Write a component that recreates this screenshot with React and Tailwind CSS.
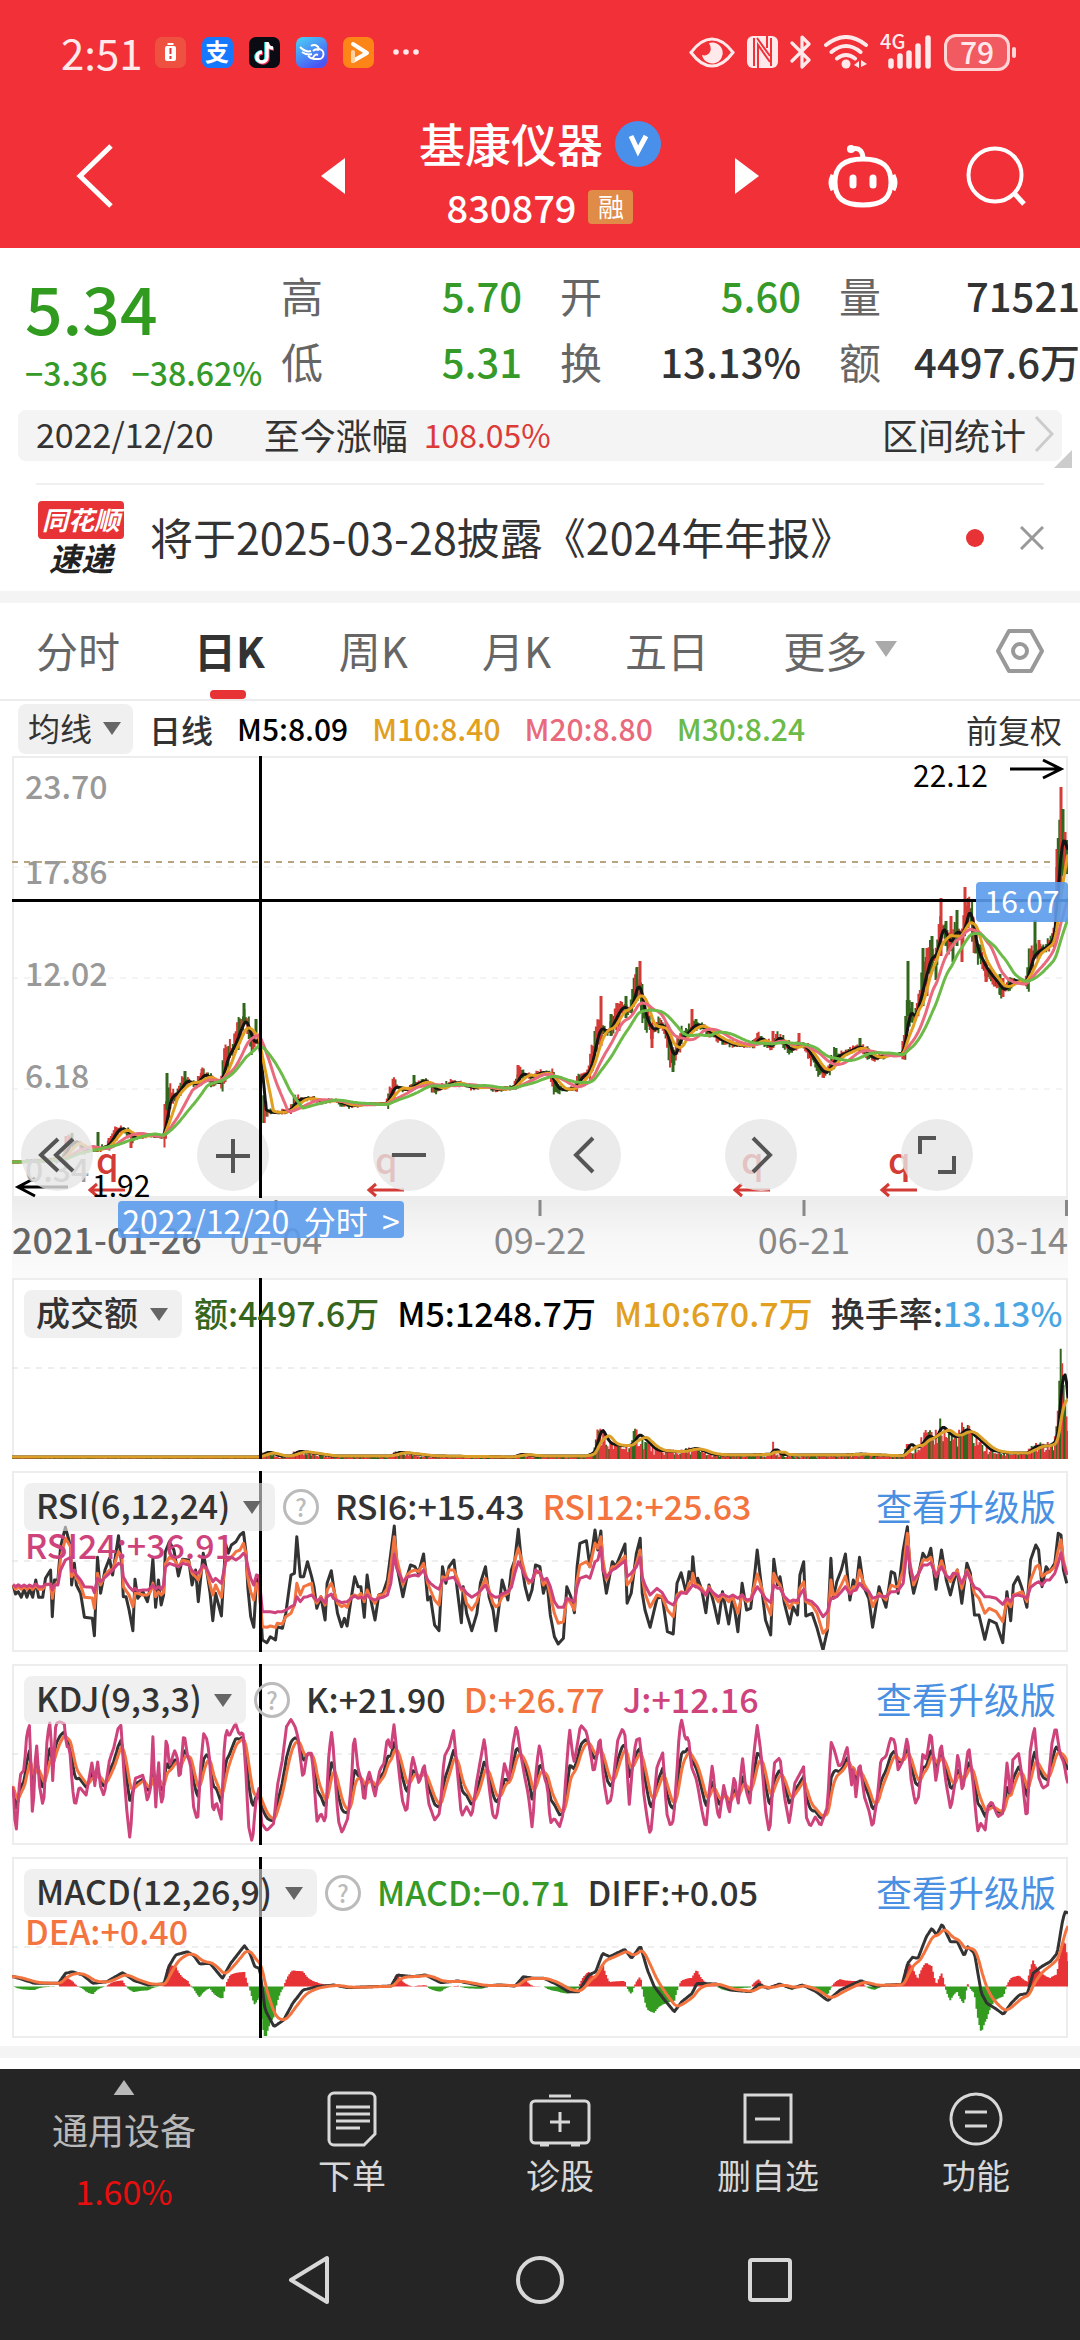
import React from 'react';

const BARS = 728;
const WIDTH = 1056;
const STEP = WIDTH / (BARS - 1);

const COLORS = {
  black: '#141414',
  ink: '#333333',
  orange: '#e2a021',
  pink: '#e96a7c',
  green: '#6cba48',
  coral: '#f3743f',
  magenta: '#cf437c',
  up: '#d23b36',
  down: '#32661c',
};

// [x, y] turning points of the closing price, in chart pixels
const closePoints = [
  [0, 406], [22, 405], [50, 402], [56, 387], [64, 386], [71, 394], [84, 394], [95, 389], [105, 372], [112, 374], [120, 382],
  [133, 379], [151, 381], [153, 354], [156, 342], [165, 336], [172, 324], [182, 329], [191, 317], [199, 326], [208, 327],
  [212, 304], [220, 291], [229, 267], [233, 262], [237, 284], [243, 287], [247, 279], [248, 350], [252, 355], [263, 357],
  [277, 354], [283, 344], [296, 342], [308, 346], [320, 344], [336, 350], [353, 348], [373, 348], [380, 330], [392, 334],
  [411, 324], [423, 334], [440, 326], [460, 332], [473, 331], [484, 334], [501, 331], [507, 317], [518, 321], [528, 316],
  [538, 319], [542, 331], [548, 334], [562, 332], [567, 321], [576, 316], [581, 292], [586, 269], [592, 277], [597, 273],
  [603, 259], [610, 249], [616, 257], [621, 238], [625, 222], [631, 261], [640, 276], [647, 266], [653, 277], [660, 306],
  [665, 284], [674, 277], [680, 269], [686, 269], [697, 277], [707, 284], [721, 289], [738, 290], [747, 281], [757, 292],
  [765, 280], [777, 295], [786, 287], [792, 291], [801, 305], [810, 318], [815, 314], [822, 301], [834, 296], [846, 290],
  [860, 303], [872, 299], [889, 298], [892, 281], [895, 248], [900, 266], [907, 240], [912, 218], [918, 198], [923, 203],
  [927, 170], [931, 174], [936, 190], [943, 172], [949, 184], [952, 160], [957, 152], [962, 191], [973, 214], [985, 228],
  [990, 236], [998, 224], [1013, 227], [1017, 204], [1024, 195], [1033, 191], [1041, 180], [1044, 130], [1047, 70], [1051, 92], [1056, 98],
];

// single long candles: [x, top, bottom, colour]
const spikes = [
  [155, 317, 354, 'down'], [173, 315, 330, 'down'], [190, 313, 327, 'up'], [213, 304, 326, 'up'], [232, 247, 265, 'down'],
  [244, 263, 277, 'down'], [97, 382, 392, 'up'], [86, 376, 392, 'down'], [60, 377, 390, 'down'], [54, 380, 398, 'up'],
  [119, 384, 392, 'up'], [382, 323, 346, 'up'], [402, 319, 334, 'down'], [506, 309, 330, 'up'], [589, 240, 290, 'up'],
  [599, 258, 280, 'down'], [607, 249, 275, 'up'], [614, 240, 262, 'down'], [625, 211, 245, 'down'], [628, 205, 240, 'up'],
  [640, 274, 292, 'up'], [661, 294, 316, 'down'], [680, 253, 275, 'up'], [684, 263, 275, 'down'], [761, 275, 292, 'up'],
  [787, 277, 290, 'up'], [824, 292, 306, 'down'], [848, 282, 296, 'down'], [896, 205, 260, 'down'], [900, 246, 262, 'down'],
  [911, 192, 250, 'down'], [915, 192, 240, 'up'], [920, 180, 215, 'down'], [924, 207, 224, 'down'], [929, 142, 200, 'up'],
  [934, 165, 190, 'down'], [939, 160, 195, 'up'], [941, 180, 206, 'down'], [945, 154, 190, 'down'], [950, 176, 206, 'up'],
  [953, 131, 175, 'up'], [956, 144, 172, 'up'], [974, 206, 226, 'up'], [991, 222, 241, 'up'], [988, 218, 238, 'down'],
  [1023, 164, 202, 'down'], [1027, 184, 200, 'up'], [1045, 93, 170, 'up'], [1047, 83, 150, 'down'], [1049, 31, 130, 'up'],
  [1051, 53, 120, 'down'], [1053, 76, 118, 'up'], [1055, 84, 118, 'down'], [1055, 100, 112, 'up'],
];

// heights above the baseline
const volumePoints = [
  [0, 1], [246, 1], [250, 5], [257, 6], [264, 2], [277, 2], [284, 7], [298, 5], [318, 2], [377, 2], [384, 6], [401, 4], [418, 2],
  [498, 1], [508, 4], [522, 2], [573, 2], [582, 7], [586, 32], [588, 30], [594, 16], [601, 13], [612, 12], [620, 14], [623, 25], [630, 20],
  [642, 8], [666, 6], [682, 10], [697, 4], [711, 3], [735, 3], [759, 4], [761, 15], [764, 4], [780, 3], [801, 3], [830, 3], [846, 4], [862, 3],
  [891, 2], [895, 17], [900, 10], [907, 12], [914, 24], [921, 18], [928, 34], [933, 26], [942, 20], [953, 30], [958, 24], [966, 18],
  [976, 8], [993, 5], [1014, 5], [1021, 12], [1035, 12], [1043, 18], [1046, 50], [1049, 116], [1051, 82], [1053, 58], [1056, 28],
];

// [x, rsi6, rsi12, rsi24] sampled at three units a pixel, two half screens
const rsiLeft = [
  [38, 345, 345, 343], [45, 372, 358, 350], [53, 365, 352, 344], [62, 382, 358, 350], [70, 358, 350, 345], [78, 382, 358, 350],
  [86, 358, 350, 345], [95, 382, 358, 350], [104, 330, 345, 342], [112, 382, 358, 350], [124, 382, 358, 350], [132, 325, 345, 343],
  [147, 300, 342, 343], [152, 440, 385, 360], [158, 330, 345, 345], [168, 330, 340, 345], [176, 230, 265, 300], [190, 172, 205, 270],
  [205, 230, 230, 262], [208, 345, 320, 305], [216, 280, 305, 300], [222, 345, 325, 315], [234, 370, 345, 330], [245, 442, 382, 350],
  [268, 445, 384, 352], [274, 497, 415, 368], [283, 262, 310, 325], [292, 370, 345, 335], [305, 300, 315, 322], [318, 265, 300, 310],
  [327, 315, 300, 300], [344, 197, 245, 280], [354, 290, 262, 285], [358, 380, 350, 320], [366, 380, 362, 335], [375, 420, 375, 350],
  [386, 482, 410, 362], [392, 328, 370, 355], [400, 385, 370, 362], [415, 365, 375, 360], [428, 395, 375, 360], [437, 350, 365, 355],
  [444, 265, 340, 345], [452, 412, 380, 358], [460, 330, 365, 350], [468, 405, 375, 358], [475, 375, 368, 345], [480, 245, 282, 292],
  [492, 215, 262, 280], [505, 240, 268, 285], [518, 318, 290, 290], [530, 268, 270, 280], [548, 270, 275, 285], [558, 345, 310, 302],
  [568, 300, 320, 308], [576, 395, 330, 310], [590, 250, 285, 285], [600, 300, 300, 295], [610, 370, 345, 318], [618, 452, 375, 335],
  [626, 370, 345, 325], [643, 438, 382, 340], [655, 222, 270, 275], [663, 250, 270, 268], [672, 225, 262, 262], [685, 215, 245, 270],
  [697, 195, 240, 262], [707, 187, 220, 250], [714, 245, 250, 258], [720, 355, 325, 290], [728, 440, 365, 325], [737, 472, 390, 345],
  [745, 330, 340, 315], [752, 325, 350, 318], [762, 510, 470, 425], [775, 518, 472, 425], [785, 500, 468, 425], [800, 510, 472, 428],
  [805, 470, 460, 425], [820, 475, 462, 425], [830, 430, 440, 420], [845, 315, 430, 410], [855, 310, 405, 405], [862, 200, 340, 380],
  [872, 320, 375, 395], [882, 320, 350, 382], [893, 275, 345, 380], [905, 320, 340, 375], [912, 350, 385, 382], [920, 415, 400, 392],
  [932, 380, 380, 385], [944, 450, 405, 398], [950, 340, 360, 380], [962, 302, 340, 372], [968, 345, 355, 385], [980, 430, 400, 392],
  [992, 470, 410, 398], [1000, 445, 405, 396], [1008, 468, 412, 395], [1020, 385, 380, 385], [1030, 320, 375, 378], [1040, 350, 380, 385],
  [1048, 350, 370, 382], [1058, 442, 395, 385], [1066, 315, 360, 375], [1075, 380, 380, 385], [1089, 450, 400, 390], [1100, 375, 375, 385],
  [1112, 370, 375, 382], [1125, 330, 355, 375], [1135, 250, 290, 340], [1145, 168, 200, 252], [1152, 285, 265, 295], [1170, 380, 345, 335],
  [1182, 320, 315, 322], [1192, 285, 305, 318], [1205, 290, 300, 315], [1215, 310, 305, 318], [1230, 252, 280, 300], [1242, 390, 340, 330],
  [1250, 380, 360, 340], [1262, 465, 390, 350], [1275, 482, 405, 358], [1285, 290, 320, 330], [1295, 340, 325, 330], [1304, 290, 300, 325],
  [1318, 270, 300, 322], [1328, 360, 325, 338], [1340, 458, 360, 355], [1345, 350, 355, 355], [1355, 430, 400, 370], [1370, 482, 420, 382],
  [1385, 430, 395, 372], [1395, 340, 360, 362], [1410, 290, 325, 345], [1420, 380, 360, 368], [1432, 420, 400, 378], [1440, 482, 410, 382],
  [1448, 420, 405, 380], [1458, 330, 380, 372], [1475, 390, 370, 365], [1485, 300, 345, 352], [1495, 270, 270, 310], [1505, 178, 235, 275],
  [1515, 285, 270, 295], [1525, 350, 310, 320], [1535, 390, 340, 330], [1545, 360, 330, 335], [1555, 285, 310, 300],
];
const rsiRight = [
  [0, 290, 305, 310], [10, 370, 345, 330], [20, 330, 330, 325], [30, 435, 375, 350], [42, 500, 430, 395], [53, 522, 460, 412],
  [68, 505, 455, 412], [78, 350, 385, 385], [90, 380, 400, 390], [100, 428, 420, 395], [108, 290, 330, 350], [116, 220, 285, 325],
  [135, 212, 275, 318], [145, 290, 290, 325], [160, 180, 220, 275], [168, 240, 235, 270], [177, 183, 200, 232], [183, 300, 270, 300],
  [193, 370, 330, 322], [210, 275, 290, 300], [220, 290, 290, 295], [247, 222, 258, 272], [253, 400, 345, 320], [265, 370, 330, 310],
  [280, 250, 280, 290], [291, 205, 240, 262], [297, 370, 320, 320], [305, 420, 370, 345], [320, 472, 412, 375], [340, 385, 375, 355],
  [355, 380, 380, 368], [370, 485, 420, 395], [387, 492, 440, 405], [398, 340, 375, 385], [410, 308, 365, 368], [425, 370, 370, 370],
  [433, 305, 340, 360], [440, 330, 340, 350], [444, 260, 310, 345], [452, 350, 345, 350], [458, 325, 345, 352], [470, 360, 355, 362],
  [482, 428, 375, 375], [491, 345, 350, 355], [505, 400, 375, 370], [518, 460, 395, 380], [530, 365, 375, 372], [548, 462, 395, 382],
  [560, 380, 380, 375], [575, 485, 430, 385], [587, 340, 375, 375], [600, 420, 395, 390], [612, 415, 390, 388], [622, 330, 350, 368],
  [631, 240, 312, 350], [640, 320, 340, 362], [655, 450, 395, 385], [670, 495, 435, 398], [679, 268, 310, 345], [690, 345, 335, 355],
  [697, 320, 345, 355], [710, 400, 385, 380], [725, 462, 415, 395], [735, 410, 395, 390], [748, 435, 400, 392], [755, 315, 355, 375],
  [766, 275, 335, 358], [772, 438, 395, 388], [790, 430, 405, 395], [805, 475, 430, 410], [822, 540, 490, 440], [835, 480, 475, 425],
  [845, 265, 330, 385], [852, 385, 375, 385], [862, 335, 370, 380], [875, 300, 345, 365], [887, 252, 318, 350], [900, 390, 370, 372],
  [910, 330, 350, 362], [918, 355, 350, 360], [928, 262, 300, 340], [940, 350, 340, 355], [955, 385, 365, 365], [966, 472, 410, 385],
  [985, 350, 370, 378], [1005, 412, 390, 380], [1020, 305, 345, 365], [1030, 310, 350, 365], [1040, 370, 350, 362], [1055, 240, 300, 340],
  [1067, 170, 190, 230], [1075, 310, 280, 290], [1085, 370, 345, 330], [1100, 310, 310, 310], [1112, 250, 270, 285], [1125, 270, 270, 285],
  [1135, 235, 262, 278], [1150, 358, 320, 318], [1166, 240, 272, 290], [1180, 330, 315, 318], [1192, 375, 335, 325], [1200, 340, 320, 310],
  [1212, 300, 300, 312], [1225, 400, 355, 340], [1240, 280, 300, 305], [1250, 310, 320, 330], [1262, 435, 370, 352], [1275, 435, 385, 358],
  [1292, 508, 430, 380], [1305, 450, 415, 380], [1325, 460, 425, 385], [1344, 518, 455, 403], [1356, 365, 390, 385], [1367, 452, 410, 395],
  [1375, 345, 375, 378], [1388, 320, 370, 375], [1400, 355, 365, 378], [1414, 412, 395, 385], [1425, 270, 330, 352], [1440, 225, 290, 340],
  [1448, 240, 285, 335], [1458, 350, 320, 345], [1470, 290, 310, 330], [1480, 305, 305, 330], [1495, 280, 290, 310], [1505, 190, 240, 280],
  [1513, 195, 210, 248], [1520, 300, 270, 280], [1530, 340, 310, 315],
];

const jLeft = [
  [38, 950], [46, 1100], [58, 915], [70, 900], [78, 790], [86, 765], [95, 1060], [105, 805], [115, 950], [126, 1015], [137, 800],
  [147, 745], [152, 950], [162, 760], [175, 755], [187, 762], [193, 830], [202, 830], [210, 950], [218, 1012], [230, 950], [250, 975],
  [268, 872], [275, 950], [283, 870], [292, 950], [302, 978], [318, 870], [330, 835], [343, 775], [352, 765], [358, 880], [368, 1020],
  [378, 1115], [385, 980], [392, 925], [405, 920], [416, 915], [428, 995], [438, 950], [444, 800], [452, 1020], [460, 860], [467, 1005],
  [475, 975], [483, 790], [492, 890], [507, 842], [515, 860], [522, 940], [534, 785], [545, 860], [553, 880], [562, 1010], [574, 1055],
  [582, 900], [591, 790], [602, 810], [610, 880], [618, 1030], [628, 995], [643, 1050], [650, 850], [657, 775], [665, 800], [684, 760],
  [695, 795], [705, 785], [712, 870], [722, 1070], [733, 1120], [742, 1000], [752, 955], [760, 1060], [775, 1082], [795, 1060], [805, 950],
  [820, 870], [832, 770], [845, 748], [857, 770], [865, 800], [873, 870], [880, 928], [892, 850], [905, 850], [912, 930], [920, 1055],
  [932, 1030], [945, 1060], [955, 850], [964, 778], [972, 900], [982, 1050], [993, 1088], [1010, 1045], [1020, 950], [1028, 785],
  [1040, 900], [1050, 930], [1058, 1005], [1065, 930], [1073, 905], [1089, 980], [1103, 900], [1115, 880], [1125, 800], [1135, 840],
  [1144, 762], [1155, 870], [1168, 990], [1181, 1030], [1190, 930], [1198, 858], [1208, 900], [1217, 942], [1232, 880], [1245, 1000],
  [1262, 1050], [1277, 1030], [1290, 860], [1305, 830], [1317, 780], [1328, 900], [1340, 1040], [1355, 1010], [1370, 1040], [1385, 930],
  [1397, 860], [1407, 802], [1420, 950], [1432, 1040], [1442, 1045], [1455, 950], [1465, 880], [1478, 930], [1490, 820], [1500, 765],
  [1512, 850], [1522, 910], [1535, 980], [1546, 1080], [1555, 920], [1565, 830],
];
const jRight = [
  [0, 825], [12, 920], [22, 950], [30, 1060], [42, 1045], [57, 1070], [68, 1030], [78, 880], [86, 775], [98, 880], [106, 840],
  [118, 765], [135, 785], [147, 850], [156, 912], [165, 860], [174, 795], [185, 930], [196, 1000], [207, 990], [216, 900], [226, 810],
  [240, 775], [248, 800], [259, 1010], [268, 900], [279, 810], [291, 805], [300, 960], [312, 1050], [321, 1100], [330, 1000], [340, 890],
  [357, 848], [368, 1030], [379, 1068], [388, 1050], [398, 900], [405, 780], [412, 748], [422, 810], [431, 800], [440, 890], [455, 930],
  [470, 1020], [482, 1078], [492, 960], [501, 880], [510, 990], [520, 1050], [534, 945], [550, 1030], [565, 912], [575, 1010], [588, 860],
  [598, 960], [610, 1000], [620, 860], [631, 765], [642, 850], [655, 1020], [667, 1095], [680, 880], [697, 862], [710, 980], [724, 1060],
  [740, 940], [766, 890], [773, 1040], [785, 1070], [800, 1040], [815, 1068], [835, 1010], [845, 815], [855, 840], [868, 890], [878, 880],
  [892, 830], [905, 945], [910, 890], [918, 985], [928, 870], [942, 980], [955, 1020], [966, 1075], [980, 980], [990, 870], [1005, 860],
  [1018, 805], [1030, 810], [1040, 900], [1055, 870], [1067, 797], [1078, 930], [1090, 1000], [1100, 980], [1112, 850], [1122, 870],
  [1135, 780], [1150, 935], [1165, 815], [1178, 930], [1193, 1020], [1205, 940], [1214, 845], [1227, 970], [1245, 825], [1257, 930],
  [1271, 1085], [1280, 1060], [1293, 1080], [1300, 1010], [1312, 995], [1330, 1040], [1345, 1030], [1357, 870], [1367, 995], [1373, 870],
  [1390, 850], [1400, 920], [1414, 1060], [1424, 840], [1436, 770], [1448, 920], [1460, 955], [1475, 945], [1487, 820], [1498, 768],
  [1510, 850], [1522, 880], [1532, 940],
];

const diffPoints = [
  [20, 380], [50, 400], [85, 400], [95, 370], [105, 365], [120, 375], [135, 400], [155, 395], [178, 368], [195, 392], [215, 405],
  [238, 402], [245, 350], [255, 315], [272, 305], [282, 318], [290, 342], [305, 340], [323, 385], [335, 340], [355, 287], [363, 310],
  [370, 350], [377, 355], [385, 480], [398, 530], [412, 510], [425, 460], [440, 420], [460, 410], [485, 405], [505, 413], [540, 410],
  [568, 408], [577, 375], [600, 380], [618, 375], [640, 398], [665, 393], [700, 408], [725, 405], [748, 408], [760, 380], [775, 385],
  [790, 385], [810, 405], [825, 425], [840, 425], [855, 375], [865, 365], [875, 310], [885, 320], [907, 298], [917, 325], [930, 288],
  [940, 360], [950, 410], [965, 450], [979, 485], [990, 455], [1005, 430], [1012, 400], [1040, 402], [1060, 420], [1090, 425],
  [1102, 403], [1115, 415], [1132, 402], [1150, 415], [1165, 405], [1185, 425], [1202, 452], [1220, 420], [1250, 392], [1270, 408],
  [1290, 405], [1310, 403], [1318, 340], [1325, 322], [1333, 325], [1345, 260], [1353, 235], [1360, 255], [1368, 222], [1380, 275],
  [1390, 275], [1400, 318], [1405, 290], [1415, 310], [1425, 430], [1433, 460], [1445, 475], [1457, 493], [1468, 460], [1480, 435],
  [1492, 430], [1500, 370], [1512, 350], [1525, 335], [1535, 310], [1543, 210], [1547, 183], [1550, 190],
];

const noise = (i) => {
  const v = Math.sin(i * 12.9898) * 43758.5453;
  return v - Math.floor(v);
};

// linear interpolation of turning points on to one value a bar
function resample(points) {
  let k = 0;
  return Array.from({ length: BARS }, (_, i) => {
    const x = i * STEP;
    while (k < points.length - 2 && points[k + 1][0] < x) k++;
    const [x0, y0] = points[k];
    const [x1, y1] = points[k + 1];
    const t = Math.min(1, Math.max(0, (x - x0) / (x1 - x0)));
    return y0 + (y1 - y0) * t;
  });
}

function average(series, n) {
  return series.map((_, i) => {
    const part = series.slice(Math.max(0, i - n + 1), i + 1);
    return part.reduce((a, b) => a + b, 0) / part.length;
  });
}

function ema(series, alpha) {
  let last = series[0];
  return series.map((v) => (last = last + (v - last) * alpha));
}

const toPath = (pts) => 'M' + pts.map(([x, y]) => `${x.toFixed(1)} ${y.toFixed(1)}`).join('L');
const seriesPath = (series) => toPath(series.map((v, i) => [i * STEP, v]));

const joinHalves = (left, right) => [...left, ...right.map(([x, ...ys]) => [x + 1568, ...ys])];
const sampleX = (x) => x / 2.904 - 12;

const close = resample(closePoints);
const candles = { up: '', down: '' };
close.forEach((c, i) => {
  const prev = close[Math.max(0, i - 2)];
  const amp = Math.min(14, 2 + Math.abs(c - close[Math.max(0, i - 5)]) * 0.6);
  const top = Math.min(c, prev) - noise(i) * amp;
  const bottom = Math.max(c, prev) + noise(i + 999) * amp;
  if (i * STEP > 246 && i * STEP < 250) return;
  const side = noise(i + 77) > 0.45 === c <= prev ? 'up' : 'down';
  candles[side] += `M${(i * STEP).toFixed(1)} ${top.toFixed(1)}V${bottom.toFixed(1)}`;
});

const volume = resample(volumePoints);
const volumeBars = { up: '', down: '' };
volume.forEach((v, i) => {
  const h = i * STEP > 1044 ? v : v * (0.5 + noise(i) * 0.9);
  volumeBars[noise(i + 31) > 0.45 ? 'up' : 'down'] += `M${(i * STEP).toFixed(1)} 181V${(181 - h).toFixed(1)}`;
});
const volumeLine = (n) => seriesPath(average(volume, n).map((v) => 180 - v));

const rsi = joinHalves(rsiLeft, rsiRight);
const rsiPath = (n) => toPath(rsi.map((p) => [sampleX(p[0]), p[n] / 3 - 1]));

const j = resample(joinHalves(jLeft, jRight).map(([x, y]) => [sampleX(x), y / 3 - 194]));
const d = ema(j, 1 / 7);
const k = j.map((v, i) => (v + 2 * d[i]) / 3);

const diff = resample(diffPoints.map(([x, y]) => [x / 1.452 - 12, y / 3 - 7]));
const dea = ema(diff, 0.2);
const hist = { up: '', down: '' };
diff.forEach((v, i) => {
  const h = Math.min(51, Math.max(-60, 2 * (v - dea[i])));
  hist[h < 0 ? 'up' : 'down'] += `M${(i * STEP).toFixed(1)} 129.5v${h.toFixed(1)}`;
});

function Line({ d, color, width = 2 }) {
  return <path d={d} fill="none" stroke={color} strokeWidth={width} strokeLinejoin="round" />;
}

function Grid({ y, color = '#dddddd' }) {
  return <path d={`M0 ${y}H1056`} stroke={color} strokeWidth="1" strokeDasharray="6 6" />;
}

function Triangle({ className = 'w-[18px] h-[13px] text-[#666]' }) {
  return (
    <svg viewBox="0 0 18 13" className={className} fill="currentColor" aria-hidden="true">
      <path d="M0 0h18L9 13z" />
    </svg>
  );
}

function Picker({ label, className = 'h-12 pl-3 pr-[14px] gap-3' }) {
  return (
    <label className={`flex items-center rounded-lg bg-[#e6e6e6]/60 text-[#333] ${className}`}>
      <select aria-label={label} className="appearance-none bg-transparent leading-10 pb-1 outline-none">
        <option>{label}</option>
      </select>
      <Triangle />
    </label>
  );
}

function Panel({ label, values, extra, chart, help = true, children }) {
  return (
    <section className="relative h-[181px] border-x-2 border-t-2 border-[#ededed] text-[34px] font-medium">
      <svg viewBox="0 0 1056 181" preserveAspectRatio="none" className="absolute -left-[2px] -top-[2px] w-[calc(100%+4px)] h-[181px]">
        {chart}
        <path d="M248.5 0V181" stroke="#000" strokeWidth="3" />
      </svg>
      <div className="relative flex items-center pt-[10px] pl-[10px] pr-[10px] h-[58px] whitespace-nowrap">
        <Picker label={label} />
        {help && (
          <button className="ml-2 mr-4 w-9 h-9 shrink-0 rounded-full border-3 border-[#bbb] text-[#bbb] text-2xl leading-[28px]">?</button>
        )}
        <div className={`flex pb-1 gap-[18px] ${help ? '' : 'ml-3'}`}>
          {values.map(([text, color]) => (
            <span key={text} className={color}>{text}</span>
          ))}
        </div>
        {children}
      </div>
      {extra}
    </section>
  );
}

function UpgradeLink() {
  return <a href="#upgrade" className="ml-auto pb-1 text-4xl font-normal text-[#4a90e2]">查看升级版</a>;
}

const quotes = [
  ['高', '5.70', 'text-[#369a28]'],
  ['开', '5.60', 'text-[#369a28]'],
  ['量', '71521', 'text-[#333]'],
  ['低', '5.31', 'text-[#369a28]'],
  ['换', '13.13%', 'text-[#333]'],
  ['额', '4497.6万', 'text-[#333]'],
];

function StatusBar() {
  return (
    <div className="flex items-center h-[104px] pl-[61px] pr-[64px] text-[#ffe9ea]">
      <span className="text-[42px] leading-10 mr-3">2:51</span>
      <div className="flex items-center gap-4">
        <svg viewBox="0 0 31 31" className="w-[31px] h-[31px]">
          <rect width="31" height="31" rx="7" fill="#ee5140" />
          <path d="M12.500 6h6v2h-6z" fill="#fff" />
          <rect x="10" y="9" width="11" height="15" rx="2" fill="#fff" />
          <path d="M15.500 11v6M15.500 19v3" stroke="#d33" strokeWidth="2" />
        </svg>
        <span className="w-[31px] h-[31px] rounded-[7px] bg-[#1677ff] text-white text-2xl leading-[28px] text-center font-bold">支</span>
        <svg viewBox="0 0 31 31" className="w-[31px] h-[31px]">
          <rect width="31" height="31" rx="7" fill="#0b0b14" />
          <g fill="none" strokeWidth="3.500">
            <path d="M17 5v15a5 5 0 1 1-5-5M17 5c0 4 3 6 6 6" stroke="#25f4ee" />
            <path d="M19 6v15a5 5 0 1 1-5-5M19 6c0 4 3 6 6 6" stroke="#fe2c55" />
            <path d="M18 5v15a5 5 0 1 1-5-5M18 5c0 4 3 6 6 6" stroke="#fff" />
          </g>
        </svg>
        <svg viewBox="0 0 31 31" className="w-[31px] h-[31px]">
          <defs>
            <linearGradient id="cloud" x1="0" y1="0" x2="0.600" y2="1">
              <stop offset="0" stopColor="#4ad3f5" />
              <stop offset="1" stopColor="#4a55f5" />
            </linearGradient>
          </defs>
          <rect width="31" height="31" rx="7" fill="url(#cloud)" />
          <path d="M4 10c4 4 8 5 11 4M6 15c4 3 7 3 10 2M12 19c2 2 3 3 6 3h4a5 5 0 0 0 1-10 5 5 0 0 0-8-3M17 14c2-2 4-2 6-1M17 21c1-3 3-4 5-3" fill="none" stroke="#fff" strokeWidth="2" />
        </svg>
        <svg viewBox="0 0 31 31" className="w-[31px] h-[31px]">
          <rect width="31" height="31" rx="7" fill="#fd8416" />
          <path d="M10 7l14 9-14 8" fill="none" stroke="#fff" strokeWidth="4" strokeLinejoin="round" strokeLinecap="round" />
          <path d="M10 15v9" stroke="#ffd0a0" strokeWidth="4" strokeLinecap="round" />
        </svg>
        <svg viewBox="0 0 26 6" className="w-[26px] h-[6px] ml-[3px]" fill="currentColor">
          <circle cx="3" cy="3" r="2.800" />
          <circle cx="13" cy="3" r="2.800" />
          <circle cx="23" cy="3" r="2.800" />
        </svg>
      </div>
      <div className="flex items-center gap-3 ml-auto">
        <svg viewBox="0 0 46 31" className="w-[46px] h-[31px]">
          <path d="M2 15.500Q12 2 23 2t21 13.500Q34 29 23 29T2 15.500z" fill="none" stroke="currentColor" strokeWidth="3" />
          <path d="M20 6a10.500 10.500 0 1 1-7 12c5 2 12-3 7-12z" fill="currentColor" />
        </svg>
        <svg viewBox="0 0 31 32" className="w-[31px] h-[32px]" fill="currentColor">
          <rect width="31" height="32" rx="6" />
          <path d="M7 2v28M11 32V9l12 17M10 2l13 18M20 0v12M24 2v28" fill="none" stroke="#f13038" strokeWidth="2" />
        </svg>
        <svg viewBox="0 0 22 34" className="w-[22px] h-[34px]" fill="none" stroke="currentColor" strokeWidth="3.200" strokeLinejoin="round" strokeLinecap="round">
          <path d="M2 8l17 17-7 7V2l7 7L2 26" />
        </svg>
        <svg viewBox="0 0 44 34" className="w-[44px] h-[34px]" fill="none" stroke="currentColor" strokeWidth="4">
          <path d="M2 10Q22-6 42 10M7.500 17Q22 5 36.500 17M13 23.500q9-7 18 0" strokeLinecap="round" />
          <circle cx="22" cy="29" r="4.500" fill="currentColor" stroke="none" />
          <path d="M30 30l5-4v7zM43 29l-6-4v7z" fill="currentColor" stroke="none" />
        </svg>
        <div className="relative w-[52px] h-9">
          <span className="absolute left-0 -top-[3px] text-xl leading-5 font-medium">4G</span>
          <svg viewBox="0 0 52 36" className="w-[52px] h-9" stroke="currentColor" strokeWidth="5.500" strokeLinecap="round">
            <path d="M11 27v5M20 22v10M29 19v13M38 12v20M48 4v28" />
          </svg>
        </div>
        <div className="flex items-center gap-[2px]">
          <div className="w-[66px] h-[37px] rounded-xl border-3 border-[#ffd5d6] bg-[#f15a60] text-[30px] leading-[28px] font-medium text-center">79</div>
          <span className="w-1 h-[11px] rounded-sm bg-[#ffd5d6]" />
        </div>
      </div>
    </div>
  );
}

function TitleBar() {
  return (
    <div className="grid grid-cols-[1fr_390px_1fr] items-center h-36 text-white">
      <div className="flex items-center justify-between pl-[76px]">
        <button aria-label="返回">
          <svg viewBox="0 0 38 64" className="w-[38px] h-16" fill="none" stroke="currentColor" strokeWidth="5">
            <path d="M35 2L4 32l31 30" />
          </svg>
        </button>
        <button aria-label="上一只">
          <svg viewBox="0 0 24 36" className="w-6 h-9" fill="currentColor"><path d="M24 0v36L0 18z" /></svg>
        </button>
      </div>
      <div className="flex flex-col items-center pb-[2px]">
        <div className="flex items-center gap-3 h-16">
          <h1 className="text-[46px] leading-[56px] pb-1 font-medium">基康仪器</h1>
          <svg viewBox="0 0 46 46" className="w-[46px] h-[46px]">
            <circle cx="23" cy="23" r="23" fill="#4990ea" />
            <path d="M16 15l7 15 8-15" fill="none" stroke="#fff" strokeWidth="5" />
          </svg>
        </div>
        <div className="flex items-center gap-3 h-[62px]">
          <span className="text-[38px] leading-[44px] font-medium">830879</span>
          <span className="w-[45px] h-[34px] rounded-sm bg-[#e08b48] text-[26px] leading-[32px] text-center">融</span>
        </div>
      </div>
      <div className="flex items-center justify-between pr-[54px]">
        <button aria-label="下一只">
          <svg viewBox="0 0 24 36" className="w-6 h-9" fill="currentColor"><path d="M0 0v36l24-18z" /></svg>
        </button>
        <button aria-label="助手">
          <svg viewBox="0 0 70 64" className="w-[70px] h-16" fill="none" stroke="currentColor" strokeWidth="5">
            <path d="M35 15C14 15 7 24 7 38c0 16 8 23 28 23s28-7 28-23c0-14-7-23-28-23z" />
            <path d="M24 5c8-2 11 3 11 10" />
            <circle cx="23" cy="5" r="4" fill="currentColor" stroke="none" />
            <path d="M5 31q-4 8 0 15M65 31q4 8 0 15" />
            <path d="M25 34v7M45 34v7" strokeWidth="7" strokeLinecap="round" />
          </svg>
        </button>
        <button aria-label="搜索">
          <svg viewBox="0 0 60 60" className="w-[60px] h-[60px]" fill="none" stroke="currentColor" strokeWidth="4">
            <circle cx="29" cy="29" r="26.500" />
            <path d="M48 47l10 11" strokeWidth="5" />
          </svg>
        </button>
      </div>
    </div>
  );
}

function QuoteSummary() {
  return (
    <section className="pt-[14px] pb-4 flex font-medium">
      <div className="w-[281px] shrink-0 pl-[25px] text-[#369a28] whitespace-nowrap">
        <p className="text-[66px] leading-[88px] text-[#319b20]">5.34</p>
        <p className="text-[32px] leading-[44px] flex gap-6"><span>−3.36</span><span>−38.62%</span></p>
      </div>
      <dl className="flex-1 grid grid-cols-3 gap-x-[38px] leading-[66px] text-[40px]">
        {quotes.map(([name, value, color]) => (
          <div key={name} className="flex justify-between whitespace-nowrap">
            <dt className="text-[42px] text-[#666] font-normal">{name}</dt>
            <dd className={color}>{value}</dd>
          </div>
        ))}
      </dl>
    </section>
  );
}

function Notice() {
  return (
    <section className="mx-9 mt-[22px] flex items-center h-[108px] border-t-2 border-[#f0f0f0]">
      <div className="w-[90px] mr-6 flex flex-col items-center italic font-bold">
        <span className="w-[86px] h-[38px] rounded bg-[#e73336] text-white text-[26px] leading-[36px] text-center">同花顺</span>
        <span className="text-[32px] leading-9 text-[#222]">速递</span>
      </div>
      <a href="#news" className="text-[43px] leading-[56px] pb-1 text-[#333] whitespace-nowrap">将于2025-03-28披露《2024年年报》</a>
      <span className="ml-auto mr-9 w-[18px] h-[18px] rounded-full bg-[#e73336]" />
      <button aria-label="关闭">
        <svg viewBox="0 0 24 24" className="w-6 h-6" stroke="#999" strokeWidth="3"><path d="M1 1l22 22M23 1L1 23" /></svg>
      </button>
    </section>
  );
}

function Tabs() {
  return (
    <nav className="flex items-center h-[98px] pl-9 pr-9 gap-[74px] border-b-2 border-[#ececec] text-[42px] text-[#666] whitespace-nowrap">
      <button className="pb-1">分时</button>
      <button className="relative h-full pb-1 font-bold text-[#333]">
        日K
        <span className="absolute left-4 bottom-0 w-9 h-[9px] rounded bg-[#e73336]" />
      </button>
      <button className="pb-1">周K</button>
      <button className="pb-1">月K</button>
      <button className="pb-1">五日</button>
      <button className="flex items-center gap-2 pb-1" aria-haspopup="menu">
        更多 <Triangle className="w-[22px] h-[18px] text-[#aaa]" />
      </button>
      <button aria-label="设置" className="ml-auto">
        <svg viewBox="0 0 48 46" className="w-12 h-[46px]" fill="none" stroke="#999" strokeWidth="4" strokeLinejoin="round">
          <path d="M13 3h22l11 20-11 20H13L2 23z" />
          <circle cx="24" cy="23" r="7" />
        </svg>
      </button>
    </nav>
  );
}

function Averages() {
  return (
    <div className="flex items-center h-[55px] px-[18px] text-[30px] font-medium text-[#333] whitespace-nowrap">
      <Picker label="均线" className="h-[50px] pl-[10px] pr-3 gap-[10px] mr-4 text-[32px] font-normal" />
      <div className="flex items-center gap-6">
        <span className="text-[32px]">日线</span>
        <span className="text-black">M5:8.09</span>
        <span className="text-[#e2a021]">M10:8.40</span>
        <span className="text-[#e96a7c]">M20:8.80</span>
        <span className="text-[#6cba48]">M30:8.24</span>
      </div>
      <button className="ml-auto text-[32px] font-normal">前复权</button>
    </div>
  );
}

const controls = [
  ['快退', 'M27 2L10 18l17 16M42 2L25 18l17 16'],
  ['放大', 'M26 2v34M9 19h34'],
  ['缩小', 'M9 18h34'],
  ['向左', 'M34 1L17 18l17 17'],
  ['向右', 'M18 1l17 17-17 17'],
  ['全屏', 'M9 17V1h16M43 19v16H27'],
];

const exMarks = [77, 356, 722, 869];

function PriceChart() {
  return (
    <section className="relative h-[442px] border-2 border-[#ededed] text-[32px] leading-8 font-medium text-[#999]">
      <svg viewBox="0 0 1056 442" preserveAspectRatio="none" className="absolute -left-[2px] -top-[2px] w-[calc(100%+4px)] h-[442px]">
        <Grid y={111} color="#e8e8e8" />
        <Grid y={222} color="#e8e8e8" />
        <Grid y={333} color="#e8e8e8" />
        <path d="M0 106H1056" stroke="#b8a482" strokeWidth="2" strokeDasharray="6 6" />
        <path d={candles.down} stroke={COLORS.down} strokeWidth="2" />
        <path d={candles.up} stroke={COLORS.up} strokeWidth="2" />
        {spikes.map(([x, top, bottom, side]) => (
          <path key={`${x}-${top}`} d={`M${x} ${top}V${bottom}`} stroke={COLORS[side]} strokeWidth="3" />
        ))}
        <Line d={seriesPath(average(close, 5))} color={COLORS.black} width={3} />
        <Line d={seriesPath(average(close, 10))} color={COLORS.orange} width={3} />
        <Line d={seriesPath(average(close, 20))} color={COLORS.pink} width={3} />
        <Line d={seriesPath(average(close, 30))} color={COLORS.green} width={3} />
        <path d="M0 144.500H1056" stroke="#000" strokeWidth="3" />
        <path d="M56 431H7M23 422L6 431l17 9" fill="none" stroke="#000" strokeWidth="3" />
        <path d="M998 13h50M1031 4l18 9-18 9" fill="none" stroke="#000" strokeWidth="3" />
        {exMarks.map((x) => (
          <path key={x} d={`M${x + 36} 434H${x + 1}M${x + 8} 428l-7 6 7 6`} fill="none" stroke={COLORS.up} strokeWidth="3" />
        ))}
      </svg>
      <span className="absolute left-[11px] top-[11px]">23.70</span>
      <span className="absolute left-[11px] top-[96px]">17.86</span>
      <span className="absolute left-[11px] top-[198px]">12.02</span>
      <span className="absolute left-[11px] top-[300px]">6.18</span>
      <span className="absolute left-[11px] top-[394px]">0.34</span>
      <span className="absolute right-[78px] top-0 text-[30px] font-normal text-black">22.12</span>
      <span className="absolute left-[78px] top-[410px] text-[30px] font-normal text-black">1.92</span>
      <span className="absolute left-[82px] top-[380px] text-4xl text-[#d23b36]">q</span>
      <span className="absolute left-[361px] top-[380px] text-4xl text-[#d23b36]">q</span>
      <span className="absolute left-[727px] top-[380px] text-4xl text-[#d23b36]">q</span>
      <span className="absolute left-[874px] top-[380px] text-4xl text-[#d23b36]">q</span>
      <div className="absolute left-[7px] -right-[11px] bottom-[5px] grid grid-cols-6">
        {controls.map(([name, path]) => (
          <button key={name} aria-label={name} className="w-[72px] h-[72px] rounded-full bg-[#e6e6e6]/80 flex items-center justify-center">
            <svg viewBox="0 0 52 36" className="w-[52px] h-9 overflow-visible" fill="none" stroke="#555" strokeWidth="4"><path d={path} /></svg>
          </button>
        ))}
      </div>
      <span className="absolute left-[245px] -inset-y-[2px] w-[3px] bg-black" />
      <span className="absolute -right-[2px] top-[124px] w-[92px] h-10 rounded-sm bg-[#5b9bec]/90 text-white text-[30px] leading-9 text-center font-normal">16.07</span>
    </section>
  );
}

function TimeAxis() {
  return (
    <div className="relative h-20 bg-linear-to-b from-[#ececec] via-[#f7f7f7] to-[#fbfbfb] text-4xl leading-[44px] text-[#888]">
      <svg viewBox="0 0 1056 18" preserveAspectRatio="none" className="w-full h-[18px]" stroke="#888" strokeWidth="3">
        <path d="M264 2v16M528 2v16M792 2v16M1054.500 2v16" />
      </svg>
      <span className="absolute left-0 top-[18px] font-medium text-[#666]">2021-01-26</span>
      <span className="absolute left-1/4 top-[18px] -translate-x-1/2">01-04</span>
      <span className="absolute left-1/2 top-[18px] -translate-x-1/2">09-22</span>
      <span className="absolute left-3/4 top-[18px] -translate-x-1/2">06-21</span>
      <span className="absolute right-0 top-[18px]">03-14</span>
      <button className="absolute left-[106px] top-[3px] w-[286px] h-[37px] rounded-sm bg-[#5b9bec]/90 text-white text-[32px] leading-[32px] whitespace-pre">2022/12/20  分时  &gt;</button>
    </div>
  );
}

const toolbar = [
  ['下单', <path d="M6 2h36a5 5 0 0 1 5 5v36l-11 11H6a5 5 0 0 1-5-5V7a5 5 0 0 1 5-5zM8 16h34M8 23h34M8 30h34M8 37h24" />],
  ['诊股', <path d="M13 5h22M-1 10h50a4 4 0 0 1 4 4v34a4 4 0 0 1-4 4H-1a4 4 0 0 1-4-4V14a4 4 0 0 1 4-4zM14 31h20M24 21v20M4 54h9M35 54h9" />],
  ['删自选', <path d="M1 4h46v47H1zM11 28h25" />],
  ['功能', <path d="M24 3a25 25 0 1 0 .01 0zM13 21h22M13 35h22" />],
];

function BottomBar() {
  return (
    <footer className="bg-[#252525] text-[#d8d8d8] flex-1">
      <div className="flex h-[150px] text-[34px] leading-10">
        <button className="w-[248px] flex flex-col items-center pt-[11px] text-[#b9b9b9]">
          <Triangle className="w-[26px] h-[15px] rotate-180" />
          <span className="mt-3 text-4xl leading-11">通用设备</span>
          <span className="mt-[18px] leading-11 text-[#e80e0e]">1.60%</span>
        </button>
        {toolbar.map(([name, icon]) => (
          <button key={name} className="flex-1 flex flex-col items-center pt-[22px]">
            <svg viewBox="0 0 48 56" className="w-12 h-14 overflow-visible" fill="none" stroke="currentColor" strokeWidth="3">{icon}</svg>
            <span className="mt-[6px] leading-11">{name}</span>
          </button>
        ))}
      </div>
      <div className="grid grid-cols-[1fr_144px_1fr] items-center h-[121px]">
        <button aria-label="后退" className="justify-self-end mr-[138px]">
          <svg viewBox="0 0 42 50" className="w-[42px] h-[50px]" fill="none" stroke="currentColor" strokeWidth="4" strokeLinejoin="round"><path d="M39 3v44L3 25z" /></svg>
        </button>
        <button aria-label="主页" className="justify-self-center">
          <svg viewBox="0 0 48 48" className="w-12 h-12" fill="none" stroke="currentColor" strokeWidth="4"><circle cx="24" cy="24" r="22" /></svg>
        </button>
        <button aria-label="任务" className="justify-self-start ml-[136px]">
          <svg viewBox="0 0 44 44" className="w-11 h-11" fill="none" stroke="currentColor" strokeWidth="4"><rect x="2" y="2" width="40" height="40" rx="2" /></svg>
        </button>
      </div>
    </footer>
  );
}

export default function App() {
  return (
    <div className="min-h-screen flex flex-col bg-white overflow-hidden font-['Noto_Sans_CJK_SC',sans-serif]">
      <header className="bg-[#f13038]">
        <StatusBar />
        <TitleBar />
      </header>

      <QuoteSummary />

      <div className="relative mx-[18px] h-[51px] pb-1 rounded-lg bg-[#f4f4f4] flex items-center pl-[18px] pr-2 text-[34px] text-[#333] whitespace-nowrap">
        <span>2022/12/20</span>
        <span className="ml-[50px] text-4xl">至今涨幅</span>
        <span className="ml-4 text-[32px] text-[#dc3a38]">108.05%</span>
        <a href="#range" className="ml-auto flex items-center gap-2 text-4xl">
          区间统计
          <svg viewBox="0 0 20 36" className="w-5 h-9" fill="none" stroke="#ccc" strokeWidth="3"><path d="M2 1l16 17L2 35" /></svg>
        </a>
        <svg viewBox="0 0 18 18" className="absolute -right-[10px] -bottom-[7px] w-[18px] h-[18px]" fill="#ccc"><path d="M18 0v18H0z" /></svg>
      </div>

      <Notice />
      <div className="h-3 bg-[#f4f4f4]" />
      <Tabs />
      <Averages />

      <main className="mx-3">
        <PriceChart />
        <TimeAxis />
        <div className="flex flex-col gap-3">
          <Panel
            label="成交额"
            help={false}
            values={[['额:4497.6万', 'text-[#35661c]'], ['M5:1248.7万', 'text-black'], ['M10:670.7万', 'text-[#e2a021]']]}
            chart={
              <>
                <Grid y={90} />
                <path d={volumeBars.down} stroke={COLORS.down} strokeWidth="2" />
                <path d={volumeBars.up} stroke="#e03c3c" strokeWidth="2" />
                <Line d={volumeLine(5)} color={COLORS.black} width={3} />
                <Line d={volumeLine(10)} color="#dba02a" width={3} />
              </>
            }
          >
            <span className="ml-[18px] pb-1 text-[#333]">换手率:<span className="text-[#4aa6e2]">13.13%</span></span>
          </Panel>

          <Panel
            label="RSI(6,12,24)"
            values={[['RSI6:+15.43', 'text-[#333]'], ['RSI12:+25.63', 'text-[#f3743f]']]}
            extra={<p className="relative pl-[11px] leading-7 text-[#cf437c]">RSI24:+36.91</p>}
            chart={
              <>
                <Grid y={90} />
                <Line d={rsiPath(1)} color={COLORS.ink} width={3} />
                <Line d={rsiPath(2)} color={COLORS.coral} width={3} />
                <Line d={rsiPath(3)} color={COLORS.magenta} width={3} />
                <path d="M0 180H1056" stroke="#ededed" strokeWidth="2" />
              </>
            }
          >
            <UpgradeLink />
          </Panel>

          <Panel
            label="KDJ(9,3,3)"
            values={[['K:+21.90', 'text-[#333]'], ['D:+26.77', 'text-[#f3743f]'], ['J:+12.16', 'text-[#cf437c]']]}
            chart={
              <>
                <Grid y={90} />
                <Line d={seriesPath(k)} color={COLORS.ink} width={3} />
                <Line d={seriesPath(d)} color={COLORS.coral} width={3} />
                <Line d={seriesPath(j)} color={COLORS.magenta} width={3} />
                <path d="M0 180H1056" stroke="#ededed" strokeWidth="2" />
              </>
            }
          >
            <UpgradeLink />
          </Panel>

          <Panel
            label="MACD(12,26,9)"
            values={[['MACD:−0.71', 'text-[#369a28]'], ['DIFF:+0.05', 'text-[#333]']]}
            extra={<p className="relative pl-[11px] leading-7 text-[#f3743f]">DEA:+0.40</p>}
            chart={
              <>
                <Grid y={90} />
                <path d={hist.down} stroke="#339b20" strokeWidth="2" />
                <path d={hist.up} stroke="#e73336" strokeWidth="2" />
                <Line d={seriesPath(diff)} color={COLORS.ink} width={3} />
                <Line d={seriesPath(dea)} color={COLORS.coral} width={3} />
                <path d="M0 180H1056" stroke="#ededed" strokeWidth="2" />
              </>
            }
          >
            <UpgradeLink />
          </Panel>
        </div>
      </main>

      <div className="mt-2 mb-[11px] h-3 bg-[#f4f4f4]" />
      <BottomBar />
    </div>
  );
}
